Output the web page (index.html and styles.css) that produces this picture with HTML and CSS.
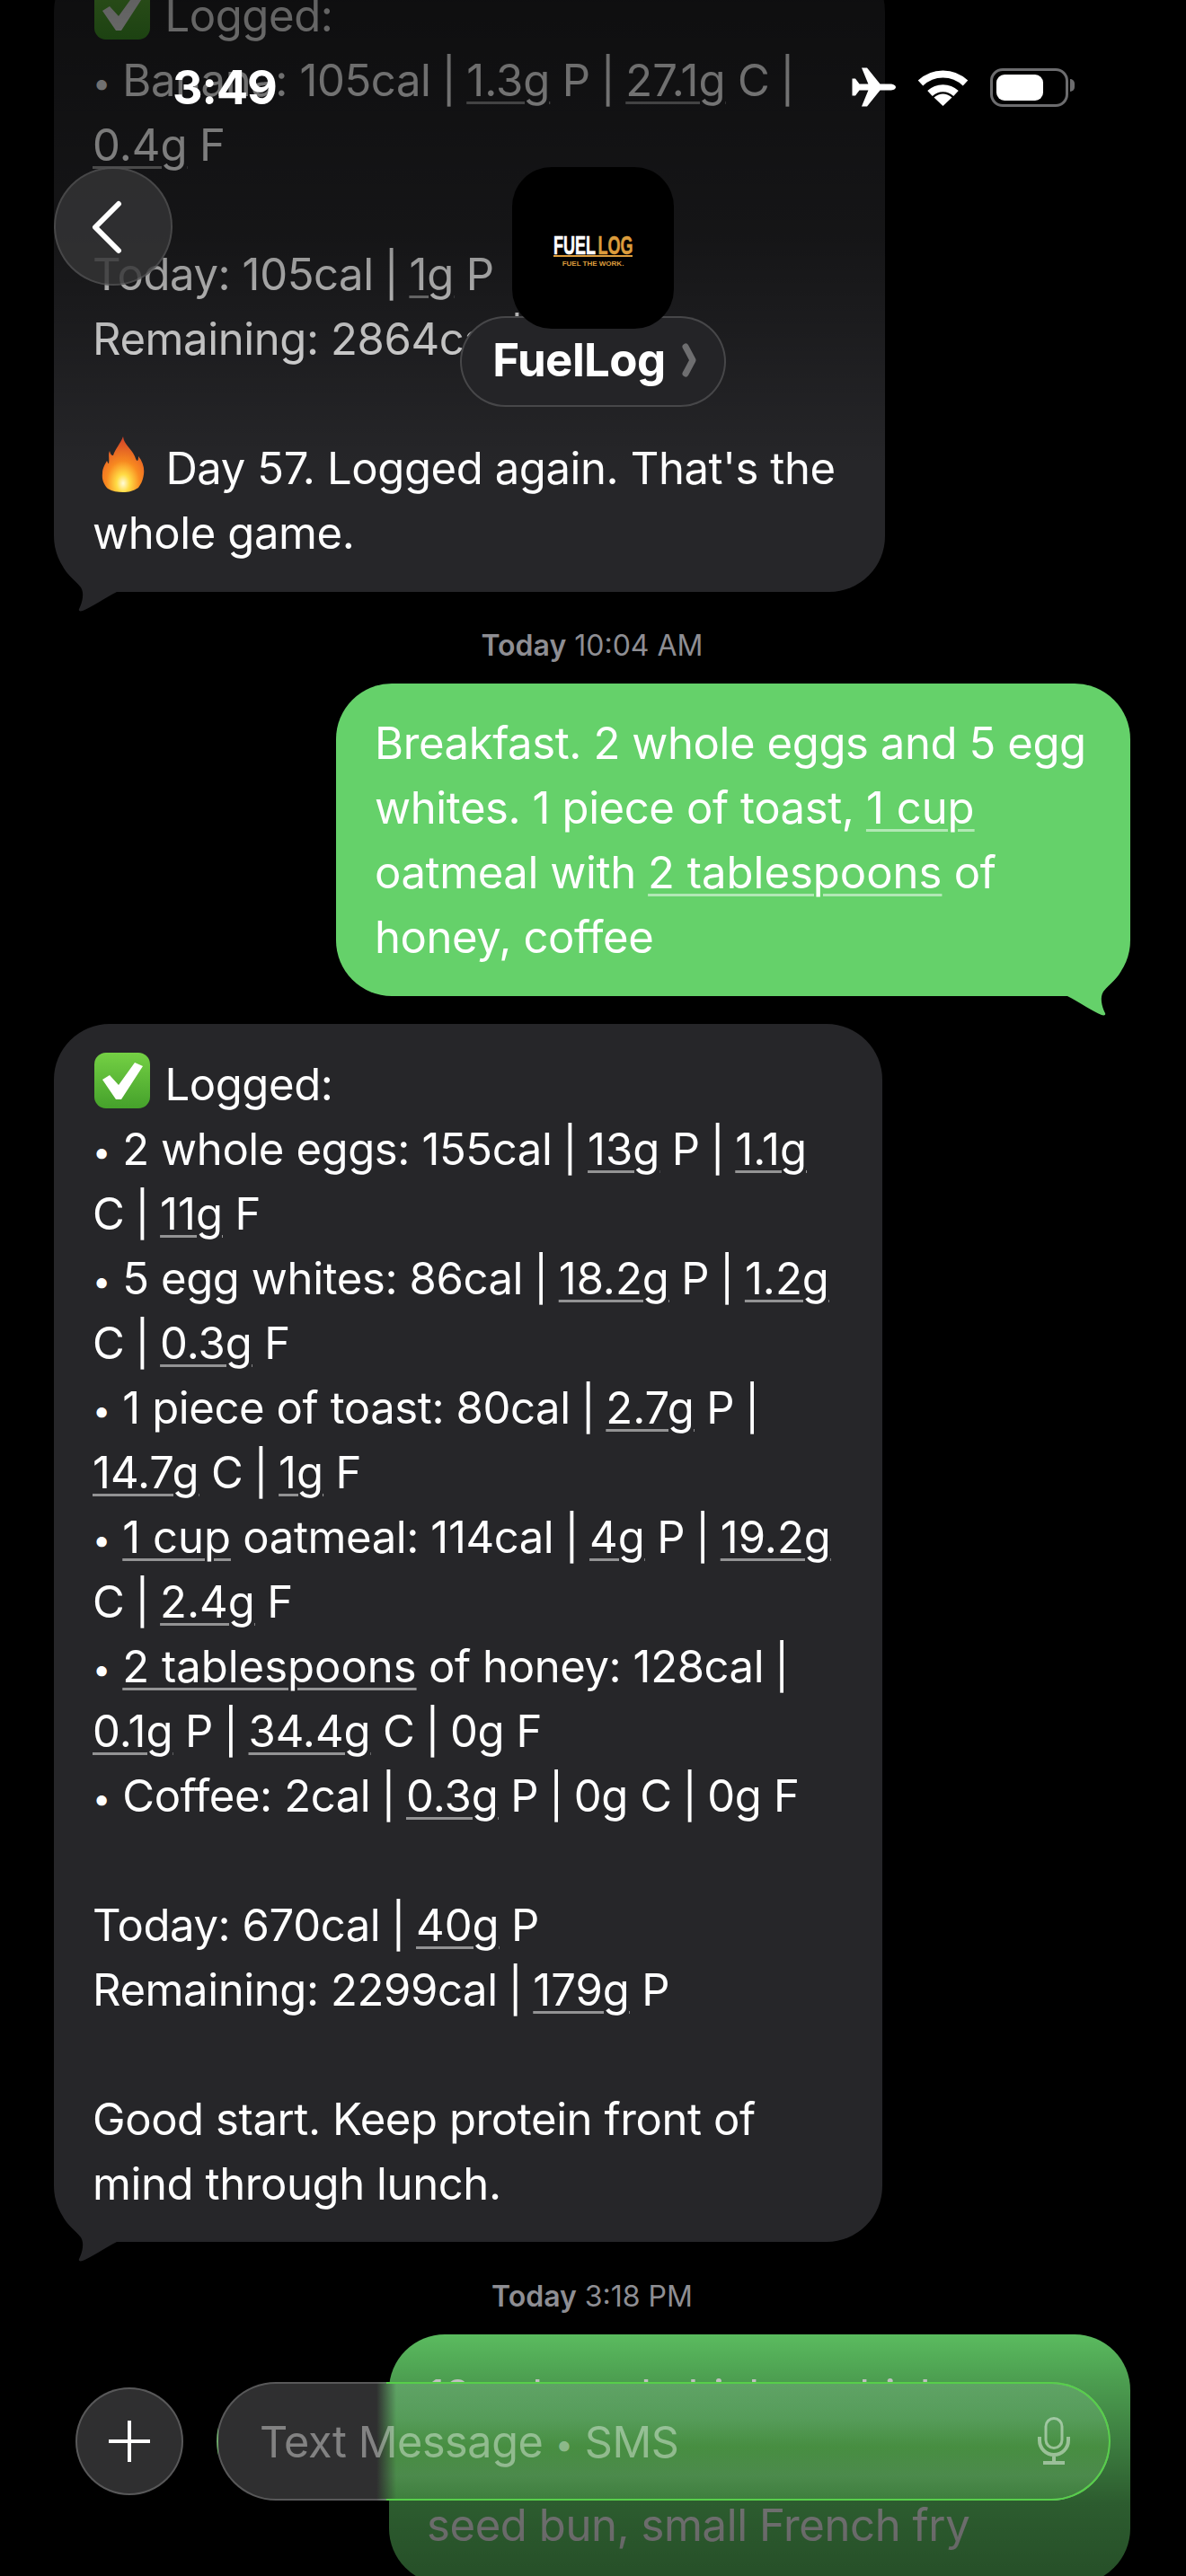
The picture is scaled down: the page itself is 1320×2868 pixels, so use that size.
FILE: index.html
```html
<!DOCTYPE html>
<html lang="en">

<head>
    <meta charset="UTF-8">
    <meta name="viewport" content="width=device-width, initial-scale=1.0">
    <title>FuelLog</title>
    <link rel="stylesheet" href="styles.css">
</head>

<body>
    <main class="thread">
        <div class="bubble bubble-in bubble-first">
            <svg class="emoji emoji-check" viewBox="0 0 62 62"><use href="#check-emoji"></use></svg> Logged:<br>
            <span class="dot">•</span> Banana: 105cal <i>|</i> <u>1.3g</u> P <i>|</i> <u>27.1g</u> C <i>|</i><br>
            <u>0.4g</u> F<br>
            <br>
            Today: 105cal <i>|</i> <u>1g</u> P<br>
            Remaining: 2864cal <i>|</i> <u>219g</u> P<br>
            <br>
            <svg class="emoji emoji-flame" viewBox="0 0 48 62">
                <defs>
                    <radialGradient id="flame-fill" cx="0.5" cy="0.84" r="0.8">
                        <stop offset="0" stop-color="#fffbd8"></stop>
                        <stop offset="0.2" stop-color="#ffdc45"></stop>
                        <stop offset="0.5" stop-color="#f98a20"></stop>
                        <stop offset="1" stop-color="#e24a2a"></stop>
                    </radialGradient>
                </defs>
                <path fill="url(#flame-fill)" d="M24 0c1 9 9 13 13 22 1 3 2 5 3 5 1-1 1-3 1-5 5 6 7 13 6 20-1 8-4 12-6 15-6 4-11 5-17 5s-12-1-17-4c-4-4-7-10-6-17 0-6 3-10 5-14 1 2 1 3 2 3 1-6-1-10 1-14 1 4 2 5 4 5 2-7 8-13 11-21z"></path>
            </svg> Day 57. Logged again. That's the<br>
            whole game.
            <svg class="tail tail-left" viewBox="0 0 80 52"><path d="M10 0c4 10 12 14 20 24 4 6 2 16-2 24-1 2 1 3 4 2 10-4 24-14 38-21V0z"></path></svg>
        </div>

        <p class="stamp stamp-first"><b>Today</b> 10:04 AM</p>

        <div class="bubble bubble-out bubble-breakfast">
            Breakfast. 2 whole eggs and 5 egg<br>
            whites. 1 piece of toast, <u>1 cup</u><br>
            oatmeal with <u>2 tablespoons</u> of<br>
            honey, coffee
            <svg class="tail tail-right" viewBox="0 0 80 52"><path d="M10 0c4 10 12 14 20 24 4 6 2 16-2 24-1 2 1 3 4 2 10-4 24-14 38-21V0z"></path></svg>
        </div>

        <div class="bubble bubble-in bubble-log">
            <svg class="emoji emoji-check" viewBox="0 0 62 62">
                <defs>
                    <linearGradient id="check-bg" x1="0" y1="0" x2="0" y2="1">
                        <stop offset="0" stop-color="#74d044"></stop>
                        <stop offset="1" stop-color="#45a12b"></stop>
                    </linearGradient>
                </defs>
                <g id="check-emoji">
                    <rect width="62" height="62" rx="13" fill="url(#check-bg)"></rect>
                    <path fill="#fff" d="M9 30l8-5 10 11L45 11l9 4-24 37h-6z"></path>
                </g>
            </svg> Logged:<br>
            <span class="dot">•</span> 2 whole eggs: 155cal <i>|</i> <u>13g</u> P <i>|</i> <u>1.1g</u><br>
            C <i>|</i> <u>11g</u> F<br>
            <span class="dot">•</span> 5 egg whites: 86cal <i>|</i> <u>18.2g</u> P <i>|</i> <u>1.2g</u><br>
            C <i>|</i> <u>0.3g</u> F<br>
            <span class="dot">•</span> 1 piece of toast: 80cal <i>|</i> <u>2.7g</u> P <i>|</i><br>
            <u>14.7g</u> C <i>|</i> <u>1g</u> F<br>
            <span class="dot">•</span> <u>1 cup</u> oatmeal: 114cal <i>|</i> <u>4g</u> P <i>|</i> <u>19.2g</u><br>
            C <i>|</i> <u>2.4g</u> F<br>
            <span class="dot">•</span> <u>2 tablespoons</u> of honey: 128cal <i>|</i><br>
            <u>0.1g</u> P <i>|</i> <u>34.4g</u> C <i>|</i> 0g F<br>
            <span class="dot">•</span> Coffee: 2cal <i>|</i> <u>0.3g</u> P <i>|</i> 0g C <i>|</i> 0g F<br>
            <br>
            Today: 670cal <i>|</i> <u>40g</u> P<br>
            Remaining: 2299cal <i>|</i> <u>179g</u> P<br>
            <br>
            Good start. Keep protein front of<br>
            mind through lunch.
            <svg class="tail tail-left" viewBox="0 0 80 52"><path d="M10 0c4 10 12 14 20 24 4 6 2 16-2 24-1 2 1 3 4 2 10-4 24-14 38-21V0z"></path></svg>
        </div>

        <p class="stamp stamp-last"><b>Today</b> 3:18 PM</p>

        <div class="bubble bubble-out bubble-lunch">
            12oz bread chicken chicken<br>
            sandwich on a sesame<br>
            seed bun, small French fry
        </div>
    </main>

    <div class="fade fade-top"></div>
    <div class="fade fade-bottom"></div>

    <header class="status-bar">
        <span class="clock">3:49</span>
        <div class="status-icons">
            <svg class="icon-plane" viewBox="0 0 49 44"><path d="M49 22c0-2.400-3.400-3.600-6-3.600H31.500L17 .5h-6l7.400 17.900H8.500L4 12.500H.5v19H4l4.500-6h9.900L11 43.500h6l14.500-17.900H43c2.600 0 6-1.200 6-3.600z"></path></svg>
            <svg class="icon-wifi" viewBox="0 0 57 41">
                <path d="M3.500 15.500a36 36 0 0 1 50 0" fill="none" stroke="#fff" stroke-width="8"></path>
                <path d="M14 27a21 21 0 0 1 29 0" fill="none" stroke="#fff" stroke-width="8"></path>
                <path d="M28.500 41L18.500 31.500q10-8 20 0z" fill="#fff"></path>
            </svg>
            <div class="battery"><div class="battery-fill"></div></div>
        </div>
    </header>

    <button class="back-button">
        <svg viewBox="0 0 40 62"><path d="M33 5L7 31l26 26" fill="none" stroke="#fff" stroke-width="6" stroke-linecap="round" stroke-linejoin="round"></path></svg>
    </button>

    <div class="contact">
        <div class="app-icon">
            <div class="logo-word"><span class="logo-letters">FUEL<span class="logo-accent">LOG</span></span></div>
            <div class="logo-tag">FUEL THE WORK.</div>
        </div>
        <div class="contact-name">
            FuelLog
            <svg viewBox="0 0 16 38"><path d="M4 4l8 15-8 15" fill="none" stroke="#6e6e70" stroke-width="7" stroke-linecap="round" stroke-linejoin="round"></path></svg>
        </div>
    </div>

    <footer class="composer">
        <button class="plus-button">
            <svg viewBox="0 0 46 46"><path d="M23 0v46M0 23h46" stroke="#fff" stroke-width="4"></path></svg>
        </button>
        <div class="text-field">
            <span class="placeholder">Text Message <span class="dot">•</span> SMS</span>
            <svg class="icon-mic" viewBox="0 0 38 54">
                <rect x="10" y="1.500" width="18" height="33" rx="9" fill="none" stroke="currentColor" stroke-width="3"></rect>
                <path d="M3 22v4a16 16 0 0 0 32 0v-4M19 42v7M7 51h24" fill="none" stroke="currentColor" stroke-width="4"></path>
            </svg>
        </div>
    </footer>
</body>

</html>
```
FILE: styles.css
```css
/* Reset Styles */
* {
    margin: 0;
    padding: 0;
    box-sizing: border-box;
}

body {
    position: relative;
    width: 1320px;
    height: 2868px;
    overflow: hidden;
    background-color: #000;
    color: #fff;
    font-family: Inter, "Noto Sans", sans-serif;
}

button {
    border: none;
    background: none;
}

/* Message thread */
.thread {
    display: flex;
    flex-direction: column;
    margin-top: -49px;
    padding: 0 62px 0 60px;
}

.bubble {
    position: relative;
    padding: 31px 0 29px 43px;
    border-radius: 62px;
    font-size: 49px;
    line-height: 72px;
    letter-spacing: -0.4px;
    white-space: nowrap;
}

.bubble u {
    letter-spacing: 0;
    text-decoration-color: rgba(255, 255, 255, 0.5);
    text-decoration-thickness: 3px;
    text-underline-offset: 6px;
}

.bubble i {
    font-style: normal;
    margin: 0 -1.5px;
}

.dot {
    font-size: 36px;
    line-height: 0;
    vertical-align: 2px;
}

.bubble-in {
    align-self: flex-start;
    background-color: #262629;
}

.bubble-out {
    align-self: flex-end;
    background-color: #65d16a;
}

.bubble-first {
    width: 925px;
}

.bubble-breakfast {
    width: 884px;
    margin-bottom: 31px;
}

.bubble-log {
    width: 922px;
    padding-top: 32px;
    padding-bottom: 28px;
}

.bubble-lunch {
    width: 825px;
    padding-top: 33px;
    padding-left: 42px;
}

.tail {
    position: absolute;
    bottom: -23px;
    width: 80px;
    height: 52px;
}

.tail-left {
    left: 0;
    fill: #262629;
}

.tail-right {
    right: 0;
    fill: #65d16a;
    transform: scaleX(-1);
}

.emoji {
    vertical-align: -9px;
}

.emoji-check {
    width: 62px;
    height: 62px;
    margin: 0 3px 0 2px;
}

.emoji-flame {
    width: 48px;
    height: 62px;
    margin: 0 10px 0 10px;
}

/* Timestamps */
.stamp {
    text-align: center;
    color: #8e8e93;
    font-size: 32px;
    line-height: 40px;
}

.stamp b {
    font-weight: 600;
}

.stamp-first {
    margin: 40px 0 22px;
}

.stamp-last {
    margin: 41px 0 22px;
}

/* Fades over the thread */
.fade {
    position: absolute;
    left: 0;
    right: 0;
}

.fade-top {
    top: 0;
    height: 520px;
    background: linear-gradient(rgba(0, 0, 0, 0.62), rgba(0, 0, 0, 0.45) 50%, rgba(0, 0, 0, 0));
}

.fade-bottom {
    bottom: 0;
    height: 270px;
    background: linear-gradient(rgba(0, 0, 0, 0.1), rgba(0, 0, 0, 0.25) 20%, rgba(0, 0, 0, 0.56) 70%, rgba(0, 0, 0, 0.62));
}

/* Status bar */
.status-bar {
    position: absolute;
    top: 72px;
    left: 192px;
    right: 131px;
    display: flex;
    justify-content: space-between;
    align-items: center;
    height: 50px;
}

.clock {
    font-size: 52px;
    font-weight: 700;
    letter-spacing: -1px;
}

.status-icons {
    display: flex;
    align-items: center;
    gap: 24px;
}

.icon-plane {
    width: 49px;
    height: 44px;
    fill: #fff;
}

.icon-wifi {
    width: 57px;
    height: 41px;
}

.battery {
    position: relative;
    width: 87px;
    height: 43px;
    padding: 4px;
    border: 3px solid #6c6c6e;
    border-radius: 14px;
}

.battery::after {
    content: "";
    position: absolute;
    top: 9px;
    right: -10px;
    width: 5px;
    height: 14px;
    background-color: #6c6c6e;
    border-radius: 0 5px 5px 0;
}

.battery-fill {
    width: 52px;
    height: 100%;
    background-color: #fff;
    border-radius: 9px;
}

/* Back button and contact */
.back-button {
    position: absolute;
    top: 186px;
    left: 60px;
    display: flex;
    justify-content: center;
    align-items: center;
    width: 132px;
    height: 132px;
    background: rgba(52, 52, 54, 0.82);
    border: 2px solid rgba(255, 255, 255, 0.12);
    border-radius: 50%;
    padding: 2px 14px 0 0;
}

.back-button svg {
    width: 40px;
    height: 62px;
}

.contact {
    position: absolute;
    top: 186px;
    left: 512px;
    width: 296px;
    display: flex;
    flex-direction: column;
    align-items: center;
}

.app-icon {
    position: relative;
    z-index: 1;
    display: flex;
    flex-direction: column;
    align-items: center;
    justify-content: center;
    width: 180px;
    height: 180px;
    background-color: #000;
    border-radius: 44px;
    padding-top: 8px;
}

.logo-word {
    display: flex;
    justify-content: center;
    width: 88px;
    height: 24px;
    border-bottom: 2px solid #dc9c3c;
    font-family: "Liberation Sans", sans-serif;
    font-size: 29px;
    line-height: 22px;
    font-weight: 700;
    white-space: nowrap;
}

.logo-letters {
    transform: scaleX(0.62);
    -webkit-text-stroke: 0.6px;
}

.logo-accent {
    margin-left: 4px;
    color: #dc9c3c;
}

.logo-tag {
    margin-top: 3px;
    color: #dc9c3c;
    font-family: "Liberation Sans", sans-serif;
    font-size: 8px;
    line-height: 9px;
    font-weight: 700;
    white-space: nowrap;
}

.contact-name {
    display: flex;
    justify-content: center;
    align-items: center;
    gap: 18px;
    width: 296px;
    height: 101px;
    margin-top: -14px;
    padding: 0 0 4px 3px;
    background: #242427;
    border: 2px solid rgba(255, 255, 255, 0.16);
    border-radius: 51px;
    font-size: 51px;
    font-weight: 700;
    letter-spacing: -0.6px;
}

.contact-name svg {
    width: 16px;
    height: 38px;
}

/* Composer */
.composer {
    position: absolute;
    top: 2652px;
    left: 84px;
    right: 84px;
    display: flex;
    align-items: center;
    gap: 37px;
}

.plus-button {
    display: flex;
    justify-content: center;
    align-items: center;
    flex-shrink: 0;
    width: 120px;
    height: 120px;
    background-color: #2f2f30;
    border: 2px solid rgba(255, 255, 255, 0.2);
    border-radius: 50%;
}

.plus-button svg {
    width: 46px;
    height: 46px;
}

/* opaque: grey over the black, frosted green over the bubble behind it */
.text-field {
    position: relative;
    display: flex;
    justify-content: space-between;
    align-items: center;
    flex: 1;
    height: 132px;
    padding: 0 42px 0 46px;
    background:
        linear-gradient(90deg, #2f2f30 176px, rgba(47, 47, 48, 0) 198px),
        linear-gradient(#5fa365, #569c5a 30%, #478e41 55%, #4c8a4c 80%, #3f7f3e);
    border: 2px solid rgba(255, 255, 255, 0.2);
    border-radius: 66px;
}

/* bright rim where the field lies over the green bubble */
.text-field::after {
    content: "";
    position: absolute;
    top: -2px;
    right: -2px;
    bottom: -2px;
    left: 187px;
    border: 2px solid #57cf4a;
    border-left: none;
    border-radius: 0 66px 66px 0;
}

.placeholder {
    color: rgba(255, 255, 255, 0.4);
    font-size: 48.500px;
    letter-spacing: -0.4px;
}

.icon-mic {
    width: 38px;
    height: 54px;
    color: rgba(255, 255, 255, 0.45);
}
```
